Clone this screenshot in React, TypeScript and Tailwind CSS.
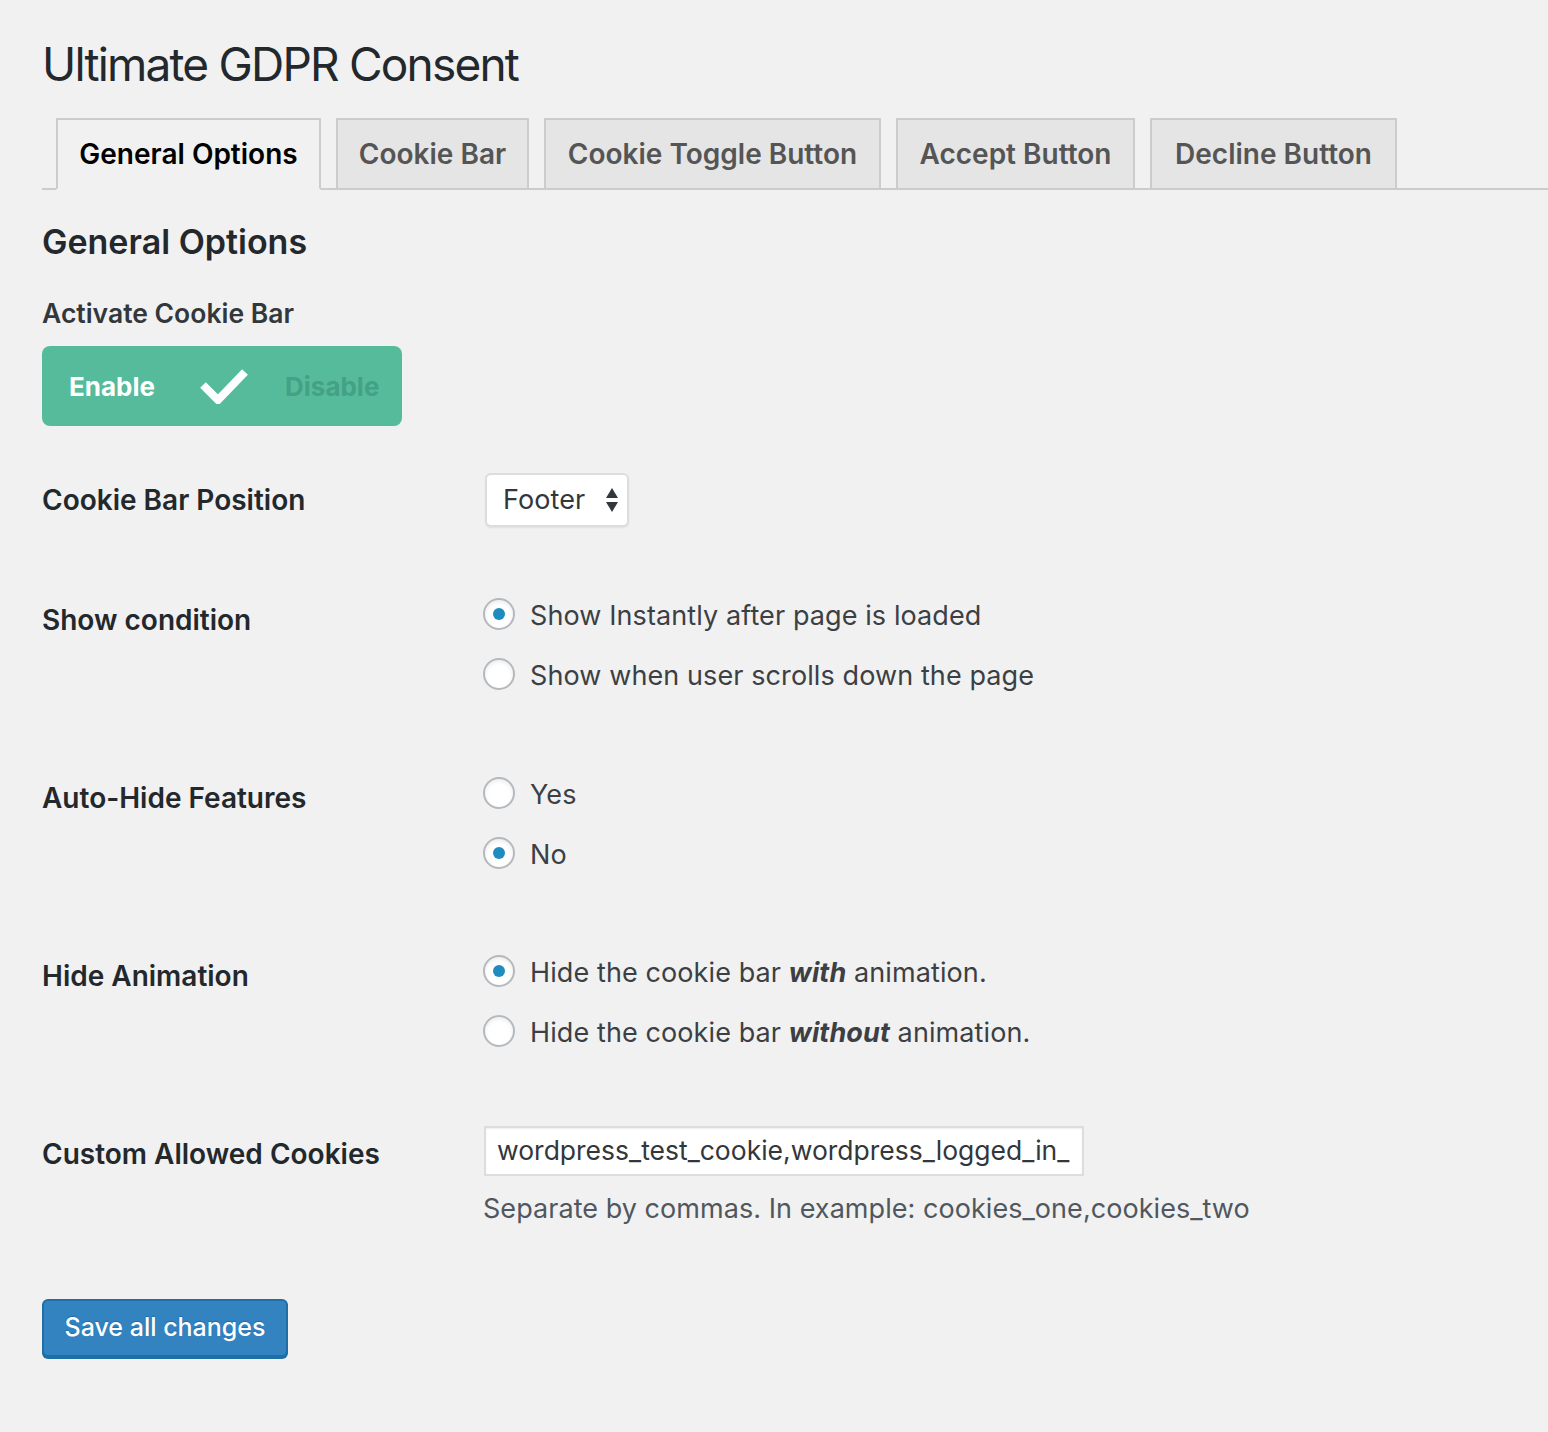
import React from "react";

const tabs = [
  { label: "General Options", w: "w-[265px]", active: true },
  { label: "Cookie Bar", w: "w-[193px]", active: false },
  { label: "Cookie Toggle Button", w: "w-[337px]", active: false },
  { label: "Accept Button", w: "w-[239px]", active: false },
  { label: "Decline Button", w: "w-[247px]", active: false },
];

const Radio = ({ checked, children }: { checked?: boolean; children: React.ReactNode }) => (
  <div className="flex h-[60px] items-center">
    <span className="flex h-[32px] w-[32px] items-center justify-center rounded-full border-2 border-[#b4b9be] bg-white shadow-[inset_0_2px_4px_rgba(0,0,0,0.08)]">
      {checked && <span className="h-[12px] w-[12px] rounded-full bg-[#1e8cbe]" />}
    </span>
    <span className="ml-[15px] mt-[3px] text-[27px] leading-[36px] tracking-[0.1px] text-[#3c3f44]">{children}</span>
  </div>
);

const Label = ({ children, className }: { children: React.ReactNode; className?: string }) => (
  <div className={"w-[441px] shrink-0 text-[28px] leading-[36px] font-semibold text-[#23282d] " + (className ?? "")}>
    {children}
  </div>
);

export default function App() {
  return (
    <div className="min-h-[1432px] w-full bg-[#f1f1f1] pl-[42px] font-['Inter','Liberation_Sans',sans-serif] text-[#444]">
      <h1 className="pt-[36px] text-[46px] leading-[56px] font-normal tracking-[-1.8px] text-[#23282d]">
        Ultimate GDPR Consent
      </h1>

      {/* tabs */}
      <div className="mt-[26px] flex items-end gap-[15px] border-b-2 border-[#ccc] pl-[14px]">
        {tabs.map((t) => (
          <div
            key={t.label}
            className={
              "-mb-[2px] flex h-[72px] items-center justify-center border-2 text-[28px] font-semibold " +
              t.w +
              (t.active
                ? " border-[#ccc] border-b-[#f1f1f1] bg-[#f1f1f1] text-black"
                : " border-[#ccc] bg-[#e5e5e5] text-[#555]")
            }
          >
            {t.label}
          </div>
        ))}
      </div>

      <h2 className="mt-[32px] text-[34px] leading-[40px] font-semibold text-[#23282d]">General Options</h2>

      <div className="mt-[33px] text-[26.5px] leading-[36px] font-semibold text-[#32373c]">Activate Cookie Bar</div>

      {/* enable / disable toggle */}
      <div className="mt-[15px] flex h-[80px] w-[360px] items-center rounded-[8px] bg-[#55bb9b] pl-[27px]">
        <span className="w-[131px] text-[26px] font-bold text-white">Enable</span>
        <svg width="48" height="36" viewBox="0 0 48 36">
          <polyline points="3,17 18,32 45,4" fill="none" stroke="#fff" strokeWidth="8" />
        </svg>
        <span className="ml-[37px] text-[26px] font-bold text-[#44a184]">Disable</span>
      </div>

      {/* position */}
      <div className="mt-[47px] flex items-center">
        <Label>Cookie Bar Position</Label>
        <div className="ml-[2px] flex h-[54px] w-[144px] items-center justify-between rounded-[6px] border-2 border-[#ddd] bg-white pl-[16px] pr-[8px] shadow-[0_1px_2px_rgba(0,0,0,0.07)]">
          <span className="text-[27px] tracking-[0.1px] text-[#32373c]">Footer</span>
          <svg width="14" height="26" viewBox="0 0 14 26">
            <path d="M7 1 L13 11 H1 Z" fill="#32373c" />
            <path d="M1 15 H13 L7 25 Z" fill="#32373c" />
          </svg>
        </div>
      </div>

      {/* show condition */}
      <div className="mt-[57px] flex items-start">
        <Label className="pt-[18px]">Show condition</Label>
        <div className="flex flex-col">
          <Radio checked>Show Instantly after page is loaded</Radio>
          <Radio>Show when user scrolls down the page</Radio>
        </div>
      </div>

      {/* auto hide */}
      <div className="mt-[59px] flex items-start">
        <Label className="pt-[17px]">Auto-Hide Features</Label>
        <div className="flex flex-col">
          <Radio>Yes</Radio>
          <Radio checked>No</Radio>
        </div>
      </div>

      {/* hide animation */}
      <div className="mt-[58px] flex items-start">
        <Label className="pt-[17px]">Hide Animation</Label>
        <div className="flex flex-col">
          <Radio checked>
            Hide the cookie bar <b className="font-bold italic">with</b> animation.
          </Radio>
          <Radio>
            Hide the cookie bar <b className="font-bold italic">without</b> animation.
          </Radio>
        </div>
      </div>

      {/* custom cookies */}
      <div className="mt-[65px] flex items-start">
        <Label className="pt-[10px]">Custom Allowed Cookies</Label>
        <div className="flex flex-col">
          <div className="ml-[1px] flex h-[50px] w-[600px] items-center overflow-hidden whitespace-nowrap border-2 border-[#ddd] bg-white px-[11px] text-[26.5px] text-[#32373c] shadow-[inset_0_1px_2px_rgba(0,0,0,0.07)]">
            wordpress_test_cookie,wordpress_logged_in_
          </div>
          <p className="mt-[15px] text-[27px] leading-[36px] tracking-[0.05px] text-[#50575e]">
            Separate by commas. In example: cookies_one,cookies_two
          </p>
        </div>
      </div>

      <button className="mt-[72px] flex h-[58px] w-[246px] items-center justify-center rounded-[6px] border-2 border-[#1f6ea6] bg-[#3383c1] text-[25px] font-medium text-white shadow-[0_2px_0_#1f6ea6] [text-shadow:0_-1px_1px_#1f6ea6]">
        Save all changes
      </button>
    </div>
  );
}
